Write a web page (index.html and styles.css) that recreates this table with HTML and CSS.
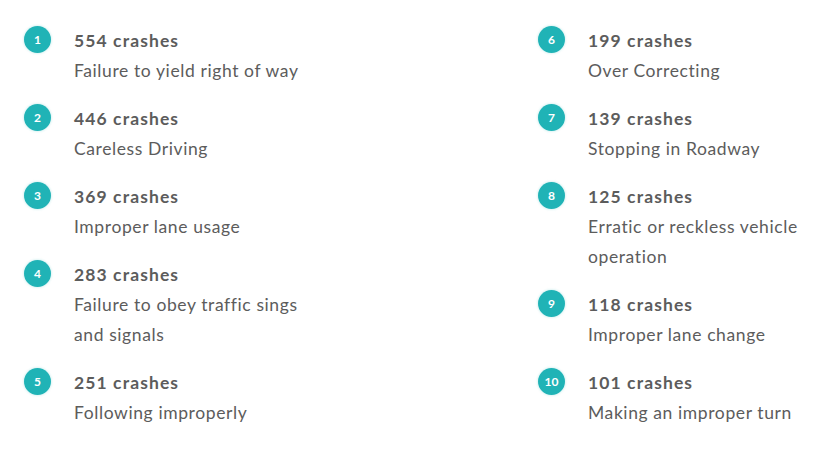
FILE: index.html
```html
<!DOCTYPE html>
<html>
<head>
<meta charset="utf-8">
<link rel="stylesheet" href="styles.css">
</head>
<body>
<div class="grid">
  <ol class="col">
    <li class="item"><span class="num">1</span><div class="text"><div class="count">554 crashes</div><div class="desc">Failure to yield right of way</div></div></li>
    <li class="item"><span class="num">2</span><div class="text"><div class="count">446 crashes</div><div class="desc">Careless Driving</div></div></li>
    <li class="item"><span class="num">3</span><div class="text"><div class="count">369 crashes</div><div class="desc">Improper lane usage</div></div></li>
    <li class="item"><span class="num">4</span><div class="text"><div class="count">283 crashes</div><div class="desc">Failure to obey traffic sings<br>and signals</div></div></li>
    <li class="item"><span class="num">5</span><div class="text"><div class="count">251 crashes</div><div class="desc">Following improperly</div></div></li>
  </ol>
  <ol class="col">
    <li class="item"><span class="num">6</span><div class="text"><div class="count">199 crashes</div><div class="desc">Over Correcting</div></div></li>
    <li class="item"><span class="num">7</span><div class="text"><div class="count">139 crashes</div><div class="desc">Stopping in Roadway</div></div></li>
    <li class="item"><span class="num">8</span><div class="text"><div class="count">125 crashes</div><div class="desc">Erratic or reckless vehicle<br>operation</div></div></li>
    <li class="item"><span class="num">9</span><div class="text"><div class="count">118 crashes</div><div class="desc">Improper lane change</div></div></li>
    <li class="item"><span class="num">10</span><div class="text"><div class="count">101 crashes</div><div class="desc">Making an improper turn</div></div></li>
  </ol>
</div>
</body>
</html>
```

FILE: styles.css
```css
html, body {
  margin: 0;
  padding: 0;
  background: #ffffff;
}
body {
  font-family: Lato, "Open Sans", sans-serif;
  color: #5c5c5c;
}
.grid {
  display: grid;
  grid-template-columns: 514px 1fr;
  padding: 26px 0 0 24px;
}
.col {
  list-style: none;
  margin: 0;
  padding: 0;
  display: flex;
  flex-direction: column;
  gap: 18px;
}
.item {
  display: flex;
  align-items: flex-start;
}
.num {
  flex: none;
  width: 27px;
  height: 27px;
  border-radius: 50%;
  background: #20b3b6;
  color: #ffffff;
  font-size: 12px;
  font-weight: 700;
  display: flex;
  align-items: center;
  justify-content: center;
  box-shadow: 0 0 2px 1px rgba(32, 179, 182, 0.15);
}
.text {
  margin-left: 23px;
  font-size: 17.5px;
  line-height: 30px;
}
.count {
  font-weight: 700;
  letter-spacing: 1.1px;
}
.desc {
  font-weight: 400;
  letter-spacing: 0.6px;
}
```
